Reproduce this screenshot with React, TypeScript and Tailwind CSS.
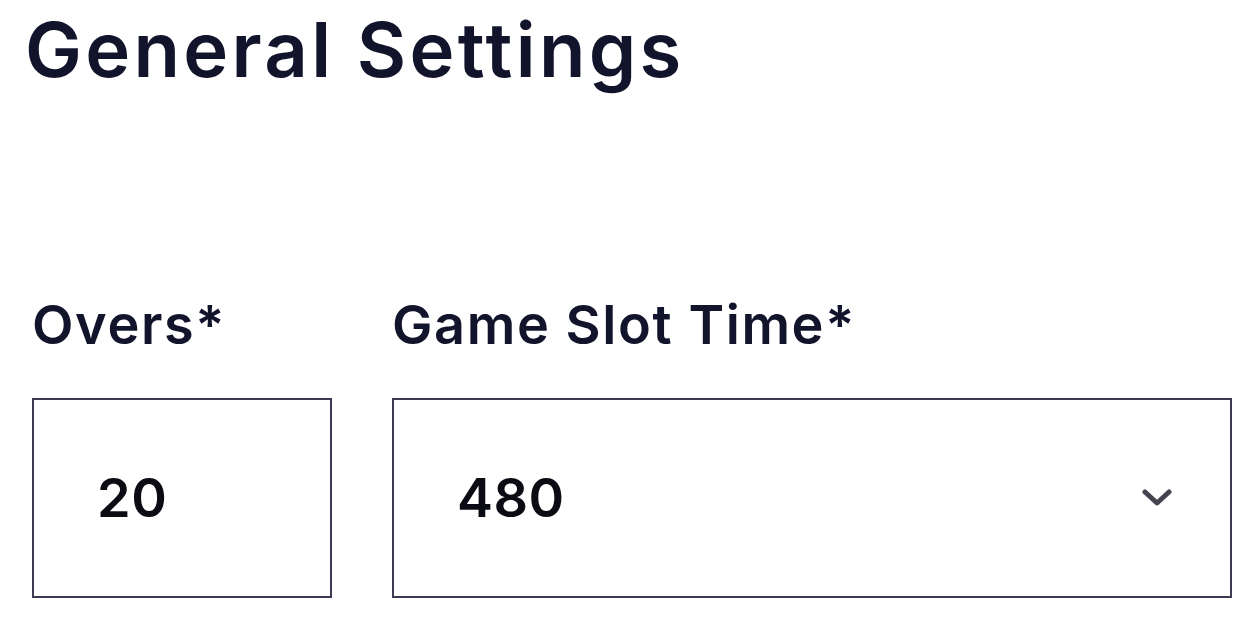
import React from 'react';

const font = { fontFamily: 'Inter, "Noto Sans", sans-serif' };

const Field = ({ label, value, width, select }: { label: string; value: string; width: string; select?: boolean }) => (
  <div className="flex flex-col">
    <label className="text-[54px] leading-none font-semibold text-[#12142b] tracking-[1.6px] mb-[46px]">{label}</label>
    <div className={`${width} h-[200px] border-2 border-[#3b3c52] flex items-center pl-[63px] pr-[58px] bg-white`}>
      <span className="text-[54px] leading-none font-semibold text-[#0b0b14] tracking-[0.5px]">{value}</span>
      {select && (
        <svg className="ml-auto" width="30" height="18" viewBox="0 0 30 18" fill="none">
          <path d="M3 3 L15 14 L27 3" stroke="#444450" strokeWidth="5" strokeLinecap="round" strokeLinejoin="round" />
        </svg>
      )}
    </div>
  </div>
);

export default function App() {
  return (
    <div className="w-[1257px] h-[617px] bg-white overflow-hidden pl-[32px]" style={font}>
      <h1 className="text-[76px] leading-none font-semibold text-[#12142b] pt-[11px] -ml-[7px] tracking-[3.3px]">General Settings</h1>
      <div className="flex gap-[60px] mt-[211px]">
        <Field label="Overs*" value="20" width="w-[300px]" />
        <Field label="Game Slot Time*" value="480" width="w-[840px]" select />
      </div>
    </div>
  );
}
